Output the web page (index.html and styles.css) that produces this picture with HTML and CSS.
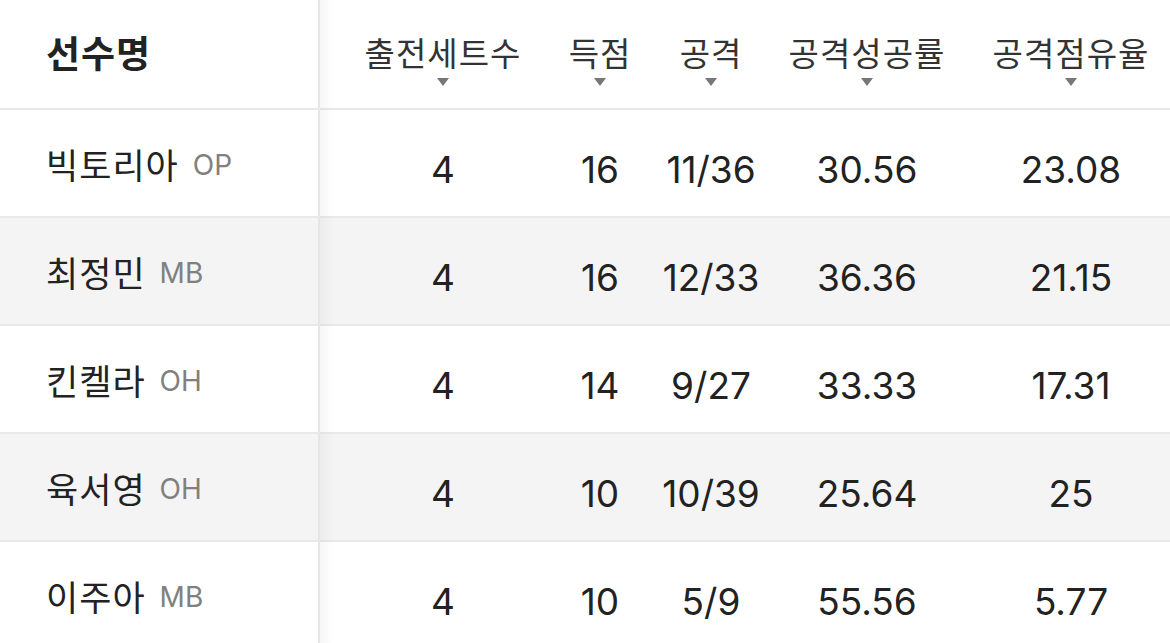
FILE: index.html
```html
<!DOCTYPE html>
<html lang="ko">
<head>
<meta charset="utf-8">
<link rel="stylesheet" href="styles.css">
</head>
<body>
<div class="table">
  <div class="row head">
    <div class="name-cell"><span class="head-name">선수명</span></div>
    <div class="cell c1"><span class="hl">출전세트수</span><span class="arrow"></span></div>
    <div class="cell c2"><span class="hl">득점</span><span class="arrow"></span></div>
    <div class="cell c3"><span class="hl">공격</span><span class="arrow"></span></div>
    <div class="cell c4"><span class="hl">공격성공률</span><span class="arrow"></span></div>
    <div class="cell c5"><span class="hl">공격점유율</span><span class="arrow"></span></div>
  </div>
  <div class="row data">
    <div class="name-cell"><span class="pname">빅토리아</span><span class="pos">OP</span></div>
    <div class="cell c1 num">4</div>
    <div class="cell c2 num">16</div>
    <div class="cell c3 num">11/36</div>
    <div class="cell c4 num">30.56</div>
    <div class="cell c5 num">23.08</div>
  </div>
  <div class="row data alt">
    <div class="name-cell"><span class="pname">최정민</span><span class="pos">MB</span></div>
    <div class="cell c1 num">4</div>
    <div class="cell c2 num">16</div>
    <div class="cell c3 num">12/33</div>
    <div class="cell c4 num">36.36</div>
    <div class="cell c5 num">21.15</div>
  </div>
  <div class="row data">
    <div class="name-cell"><span class="pname">킨켈라</span><span class="pos">OH</span></div>
    <div class="cell c1 num">4</div>
    <div class="cell c2 num">14</div>
    <div class="cell c3 num">9/27</div>
    <div class="cell c4 num">33.33</div>
    <div class="cell c5 num">17.31</div>
  </div>
  <div class="row data alt">
    <div class="name-cell"><span class="pname">육서영</span><span class="pos">OH</span></div>
    <div class="cell c1 num">4</div>
    <div class="cell c2 num">10</div>
    <div class="cell c3 num">10/39</div>
    <div class="cell c4 num">25.64</div>
    <div class="cell c5 num">25</div>
  </div>
  <div class="row data">
    <div class="name-cell"><span class="pname">이주아</span><span class="pos">MB</span></div>
    <div class="cell c1 num">4</div>
    <div class="cell c2 num">10</div>
    <div class="cell c3 num">5/9</div>
    <div class="cell c4 num">55.56</div>
    <div class="cell c5 num">5.77</div>
  </div>
</div>
</body>
</html>
```
FILE: styles.css
```css
html, body {
  margin: 0;
  padding: 0;
  background: #ffffff;
  overflow: hidden;
}
body {
  width: 1170px;
  height: 643px;
  font-family: Inter, "Noto Sans CJK KR", sans-serif;
  color: #222222;
}
.table {
  display: flex;
  flex-direction: column;
  width: 1196px;
}
.row {
  display: grid;
  grid-template-columns: 320px 246px 68px 154px 158px 250px;
  border-bottom: 2px solid #e9e9e9;
  background: #ffffff;
}
.row.alt {
  background: #f4f4f4;
}
.head {
  height: 108px;
}
.data {
  height: 106px;
}
.name-cell {
  position: relative;
  display: flex;
  align-items: center;
  padding-left: 46px;
  border-right: 2px solid #e6e6e6;
}
.name-cell::after {
  content: "";
  position: absolute;
  top: 0;
  bottom: -2px;
  right: -16px;
  width: 14px;
  background: linear-gradient(to right, rgba(0,0,0,0.035), rgba(0,0,0,0));
}
.head-name {
  font-family: "Noto Sans CJK KR", sans-serif;
  font-weight: 700;
  font-size: 37px;
  letter-spacing: 1px;
  color: #222222;
  margin-top: -4px;
}
.pname {
  font-family: "Noto Sans CJK KR", sans-serif;
  font-size: 35px;
  letter-spacing: 1px;
  color: #222222;
}
.pos {
  font-family: Inter, sans-serif;
  font-size: 28px;
  color: #808080;
  margin-left: 14px;
  margin-top: 4px;
}
.cell {
  display: flex;
  align-items: center;
  justify-content: center;
}
.head .cell {
  flex-direction: column;
  justify-content: flex-start;
  padding-top: 33px;
  box-sizing: border-box;
}
.hl {
  font-family: "Noto Sans CJK KR", sans-serif;
  font-size: 33px;
  letter-spacing: 1px;
  line-height: 38px;
  color: #333333;
  white-space: nowrap;
}
.arrow {
  margin-top: 7px;
  width: 0;
  height: 0;
  border-left: 6px solid transparent;
  border-right: 6px solid transparent;
  border-top: 8px solid #777777;
}
.num {
  font-family: Inter, sans-serif;
  font-size: 37px;
  color: #222222;
  padding-top: 12px;
  box-sizing: border-box;
}
```
